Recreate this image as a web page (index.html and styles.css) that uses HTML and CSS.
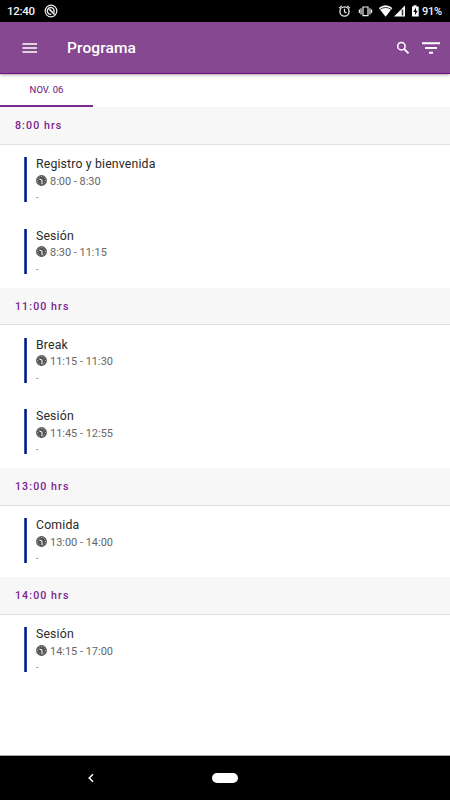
FILE: index.html
```html
<!DOCTYPE html>
<html lang="es">
<head>
<meta charset="utf-8">
<meta name="viewport" content="width=device-width, initial-scale=1">
<title>Programa</title>
<link rel="stylesheet" href="styles.css">
</head>
<body>
<svg class="defs" aria-hidden="true">
  <symbol id="clock" viewBox="0 0 12 12">
    <circle cx="6" cy="6" r="5.900" fill="#505050"/>
    <path d="M6.500 10V5.500L3.800 4.300" fill="none" stroke="#fff" stroke-width="1.100"/>
    <path d="M6 1v1.200M8.500 1.700l-.6 1M10.300 3.500l-1 .6M11 6H9.800M10.300 8.500l-1-.6M8.500 10.300l-.6-1M3.500 10.300l.6-1M1.700 8.500l1-.6M1 6h1.200M1.700 3.500l1 .6M3.500 1.700l.6 1" fill="none" stroke="#ddd" stroke-width=".8"/>
  </symbol>
</svg>
<div class="screen">
  <div class="status">
    <span class="status-time">12:40</span>
    <svg class="status-app" width="14" height="14" viewBox="0 0 14 14" fill="none" stroke="#eee">
      <circle cx="7" cy="7" r="5.8" stroke-width="1.2"/>
      <path d="M9.8 8.4A3.4 3.4 0 1 0 7.3 10.3" stroke-width="1.4"/>
      <path d="M5.3 5.2 10.6 10.5" stroke-width="1.7"/>
    </svg>
    <svg class="status-icons" width="84" height="14" viewBox="338 4 84 14" fill="none" stroke="#eee">
      <circle cx="344.5" cy="11.5" r="4.600" stroke-width="1.3"/>
      <path d="M344.5 8.8v3l2 1.2M339.1 8.1l2.6-2.2M349.9 8.1l-2.6-2.2" stroke-width="1.2"/>
      <path d="M363 7h5v8.600h-5zM361 8.200v6.200M370 8.200v6.200M359.400 9.600v3.400M371.600 9.600v3.400" stroke-width="1.2"/>
      <path d="M378.800 8Q385.600 2.600 392.400 8L385.600 16.800Z" fill="#fff" stroke="none"/>
      <path d="M380.300 9.200Q385.600 5.800 390.900 9.200" stroke="#000" stroke-width=".8"/>
      <path d="M394 16.500 405 5.500v11z" fill="#fff" stroke="none"/>
      <path d="M402.500 9.500v6" stroke="#333" stroke-width="1.500"/>
      <path d="M412 6.400h1.500V5.200h3v1.200h2.200v10.200H412z" fill="#fff" stroke="none"/>
      <path d="M416 7.500 413.400 12h1.700v3.300l2.500-4.600h-1.600z" fill="#000" stroke="none"/>
    </svg>
    <span class="battery">91%</span>
  </div>
  <header class="appbar">
    <svg class="menu" width="16" height="12" viewBox="0 0 16 12"><path d="M.5 2h14.500M.5 6h14.500M.5 10h14.500" stroke="#fff" stroke-width="1.500"/></svg>
    <h1>Programa</h1>
    <svg class="search" width="14" height="14" viewBox="0 0 14 14" fill="none" stroke="#fff"><circle cx="5.400" cy="5.200" r="3.700" stroke-width="1.500"/><path d="m8.200 8 4.300 4.300" stroke-width="1.800"/></svg>
    <svg class="filter" width="18" height="12" viewBox="0 0 18 12"><path d="M0 1.200h18M3 6h12M7 10.800h4" stroke="#fff" stroke-width="1.900"/></svg>
  </header>
  <nav class="tabs"><span class="tab">NOV. 06</span></nav>
  <main>
    <h2>8:00 hrs</h2>
    <div class="row"><div class="event"><h3>Registro y bienvenida</h3><p class="time"><svg><use href="#clock"/></svg>8:00 - 8:30</p><p class="place">-</p></div></div>
    <div class="row"><div class="event"><h3>Sesión</h3><p class="time"><svg><use href="#clock"/></svg>8:30 - 11:15</p><p class="place">-</p></div></div>
    <h2>11:00 hrs</h2>
    <div class="row"><div class="event"><h3>Break</h3><p class="time"><svg><use href="#clock"/></svg>11:15 - 11:30</p><p class="place">-</p></div></div>
    <div class="row"><div class="event"><h3>Sesión</h3><p class="time"><svg><use href="#clock"/></svg>11:45 - 12:55</p><p class="place">-</p></div></div>
    <h2>13:00 hrs</h2>
    <div class="row"><div class="event"><h3>Comida</h3><p class="time"><svg><use href="#clock"/></svg>13:00 - 14:00</p><p class="place">-</p></div></div>
    <h2>14:00 hrs</h2>
    <div class="row"><div class="event"><h3>Sesión</h3><p class="time"><svg><use href="#clock"/></svg>14:15 - 17:00</p><p class="place">-</p></div></div>
  </main>
  <footer class="navbar">
    <svg class="back" width="8" height="10" viewBox="0 0 8 10"><path d="M6 1.200 2.200 5 6 8.800" fill="none" stroke="#fff" stroke-width="1.500"/></svg>
    <span class="home"></span>
  </footer>
</div>
</body>
</html>
```
FILE: styles.css
```css
* { box-sizing: border-box; }
body, h1, h2, h3, p { margin: 0; font-weight: 400; }
body { font-family: Roboto, "Liberation Sans", sans-serif; background: #fff; }
.defs { display: none; }
.screen { height: 800px; display: flex; flex-direction: column; overflow: hidden; }
svg { flex: none; display: block; }

.status { flex: none; height: 22px; padding: 0 8px 0 7px; display: flex; align-items: center; background: #000; color: #f4f4f4; font-size: 11.5px; font-weight: 500; }
.status-time { width: 37px; letter-spacing: -.3px; white-space: nowrap; }
.status-icons { margin-left: auto; }
.battery { width: 20px; white-space: nowrap; font-size: 11px; letter-spacing: -.2px; }

.appbar { flex: none; height: 52px; padding: 0 10px 0 22px; display: flex; align-items: center; background: #854891; border-bottom: 1px solid #6d0d80; color: #fff; box-shadow: 0 1px 3px rgba(0, 0, 0, .35); position: relative; }
.appbar h1 { margin-left: 29px; font-size: 15.500px; font-weight: 500; letter-spacing: .1px; }
.search { margin-left: auto; }
.filter { margin-left: 12px; }

.tabs { flex: none; height: 33px; }
.tab { display: block; width: 93px; height: 33px; border-bottom: 2px solid #7a2a8c; color: #6d0d80; font-size: 9.500px; line-height: 32px; text-align: center; }

main { flex: 1; }
h2 { height: 37.500px; padding-left: 15px; background: #f7f7f7; border-bottom: 1px solid #dfdfdf; color: #7a2290; font-size: 10.600px; font-weight: 500; line-height: 37px; letter-spacing: 1.100px; }
.row { height: 71.500px; padding: 12.500px 0 0 24px; }
.event { height: 45px; padding-left: 12px; background: linear-gradient(90deg, #3c56a4 1px, #08108c 1px 2px, #2c459f 2px) no-repeat 0 0 / 3px 100%; }
h3 { font-size: 12.300px; line-height: 15px; letter-spacing: .15px; color: #2a2a2a; }
.time { display: flex; align-items: center; gap: 3px; height: 18px; font-size: 10.950px; color: #666; }
.time svg { width: 11px; height: 11px; margin-bottom: 2px; }
.place { font-size: 9px; line-height: 14px; color: #6872b0; }

.navbar { flex: none; height: 45px; padding-left: 87px; display: flex; align-items: center; background: #000; border-top: 1px solid #a0a6a6; }
.home { width: 26px; height: 10px; margin-left: 117px; border-radius: 5px; background: #fff; }
```
